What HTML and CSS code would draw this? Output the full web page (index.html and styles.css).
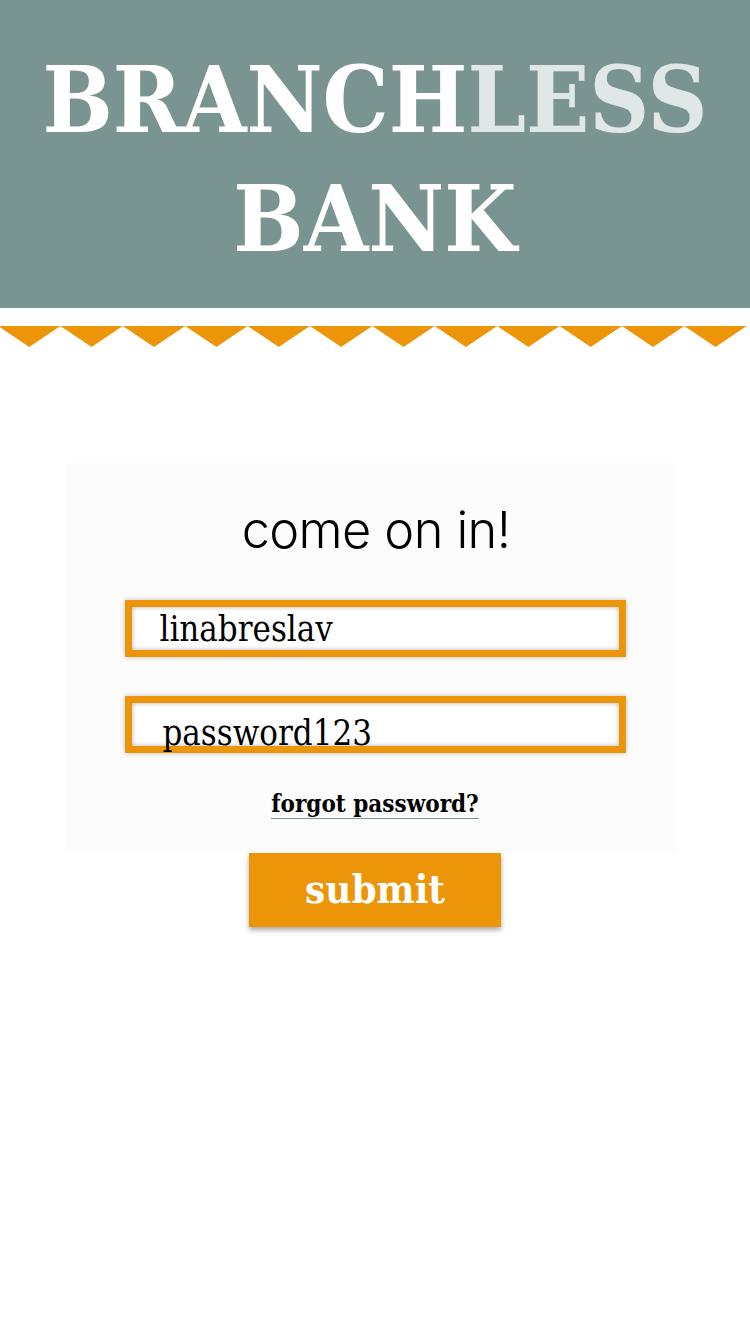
FILE: index.html
```html
<!DOCTYPE html>
<html>
<head>
<meta charset="utf-8">
<link rel="stylesheet" href="styles.css">
</head>
<body>
<header class="masthead">
  <h1 class="logo"><span class="line">BRANCH<span class="less">LESS</span></span><span class="line">BANK</span></h1>
</header>
<div class="zigzag">
  <span></span><span></span><span></span><span></span><span></span><span></span>
  <span></span><span></span><span></span><span></span><span></span><span></span>
</div>
<main class="login">
  <form class="card">
    <h2 class="title">come on in!</h2>
    <div class="field"><span class="value">linabreslav</span></div>
    <div class="field field-pw"><span class="value">password123</span></div>
    <a class="forgot" href="#">forgot password?</a>
  </form>
  <button class="submit" type="button">submit</button>
</main>
</body>
</html>
```
FILE: styles.css
```css
html, body { margin: 0; padding: 0; background: #ffffff; }
body { width: 750px; height: 1330px; overflow: hidden; font-family: "DejaVu Serif", serif; }

.masthead {
  background: #7a9492;
  height: 308px;
  display: flex;
  align-items: flex-start;
  justify-content: center;
}
.logo {
  margin: 0;
  padding-top: 40px;
  font-family: "DejaVu Serif Condensed", "DejaVu Serif", serif;
  font-stretch: condensed;
  font-weight: bold;
  font-size: 92.5px;
  line-height: 119px;
  color: #ffffff;
  text-align: center;
  display: flex;
  flex-direction: column;
  align-items: center;
}
.logo .line { display: block; }
.less { color: #e0e8e7; }

.zigzag {
  display: flex;
  margin-top: 18px;
  height: 21px;
  margin-left: -2px;
}
.zigzag span {
  flex: 0 0 62.4px;
  height: 21px;
  background: #ed9508;
  clip-path: polygon(0 0, 100% 0, 50% 100%);
}

.login {
  display: flex;
  flex-direction: column;
  align-items: center;
  padding-top: 116px;
}
.card {
  width: 612px;
  height: 389px;
  margin: 0 0 0 -8px;
  background: #fcfcfc;
  display: flex;
  flex-direction: column;
  align-items: center;
  box-sizing: border-box;
  padding-top: 36px;
}
.title {
  margin: 0 0 0 10px;
  font-family: "Inter", "Liberation Sans", sans-serif;
  font-weight: 300;
  font-size: 50.5px;
  line-height: 62px;
  color: #000000;
  letter-spacing: -0.6px;
}
.field {
  margin-top: 39px;
  margin-left: 8px;
  width: 501px;
  height: 57px;
  box-sizing: border-box;
  border: 7px solid #ed9508;
  background: #ffffff;
  box-shadow: 0 0 5px rgba(0,0,0,0.25), inset 0 0 5px rgba(0,0,0,0.3);
  display: flex;
  align-items: center;
  padding-left: 28px;
}
.field-pw { margin-top: 39px; padding-left: 31px; }
.value {
  font-family: "DejaVu Serif Condensed", "DejaVu Serif", serif;
  font-stretch: condensed;
  font-size: 34.5px;
  color: #000000;
  line-height: 40px;
}
.field-pw .value { position: relative; top: 8px; }
.forgot {
  margin-top: 37px;
  margin-left: 8px;
  font-family: "DejaVu Serif Condensed", "DejaVu Serif", serif;
  font-stretch: condensed;
  font-weight: bold;
  font-size: 24px;
  color: #000000;
  text-decoration: none;
  border-bottom: 1px solid #7a9492;
  line-height: 28px;
}
.submit {
  width: 252px;
  height: 74px;
  margin-top: 1px;
  border: 0;
  background: #ed9508;
  color: #ffffff;
  font-family: "DejaVu Serif Condensed", "DejaVu Serif", serif;
  font-stretch: condensed;
  font-weight: bold;
  font-size: 40px;
  box-shadow: 0 3px 5px rgba(0,0,0,0.35);
  padding: 0 0 4px 0;
}
```
